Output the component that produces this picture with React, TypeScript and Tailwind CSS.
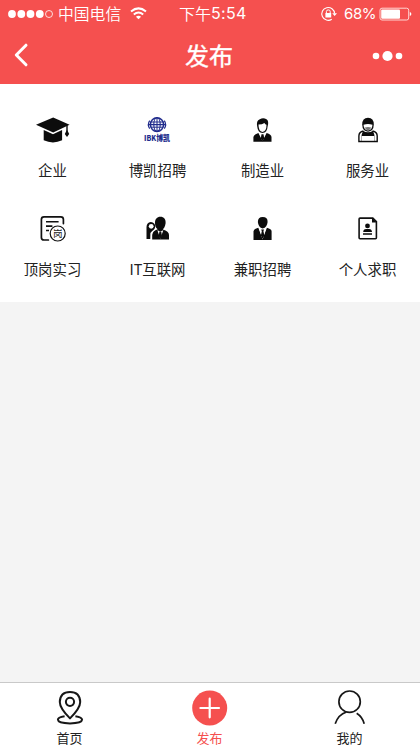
import type { ReactNode } from 'react';

const kai = 'font-["Noto_Sans_CJK_SC",sans-serif]';

function Icon({ children }: { children: ReactNode }) {
  return (
    <svg width="36" height="36" viewBox="0 0 36 36" fill="#0c0c0c" className="block">
      {children}
    </svg>
  );
}

const GraduationCap = () => (
  <Icon>
    <path d="M18.2 5.4 L34.6 12.8 L18.2 20.4 L1 12.8Z" />
    <path d="M8.7 18.1 Q13 19.8 18 22.2 Q23 19.8 27.1 18.1 V28.3 Q18 32.6 8.7 28.3Z" />
    <path d="M32 13.2 V20" stroke="#0c0c0c" strokeWidth="1.4" />
    <path d="M32 17.8 L34.2 22 L32 25 L29.8 22Z" />
  </Icon>
);

const BokaiLogo = () => (
  <Icon>
    <g fill="none" stroke="#202b8c">
      <ellipse cx="17" cy="12.6" rx="6.6" ry="6.8" strokeWidth="1.5" />
      <ellipse cx="17" cy="12.6" rx="3.2" ry="6.8" strokeWidth="1.1" />
      <path d="M17 5.8V19.4M10.6 10H23.4M10.6 15.2H23.4" strokeWidth="1" />
      <path d="M8 12.6H26" strokeWidth="1.3" />
      <path d="M9.7 8.6 Q7 12.6 9.7 16.6M24.3 8.6 Q27 12.6 24.3 16.6" strokeWidth="1.2" />
    </g>
    <text x="4" y="29.1" fontSize="8" fontWeight="900" fill="#202b8c" textLength="26" lengthAdjust="spacingAndGlyphs" fontFamily="Noto Sans CJK SC, sans-serif">IBK博凯</text>
  </Icon>
);

const OfficeWorker = () => (
  <Icon>
    <path d="M12.2 14.5 Q11 8.5 14.8 7.2 Q18.3 5.4 21.5 7.3 Q24.2 9 22.6 14.5 Q22.2 20.6 17.5 21 Q12.8 20.6 12.2 14.5Z" />
    <path d="M13.5 12.6 Q17.2 12.6 19.4 11 Q20.2 12.4 21.5 12.8 Q21.6 19.3 17.5 20 Q13.4 19.3 13.5 12.6Z" fill="#fff" />
    <path d="M8.4 29.7 V25 Q8.7 22.6 13.4 21 L17.5 29 L21.6 21 Q26.3 22.6 26.5 25 V29.7Z" />
    <path d="M14.2 20.8 L17.5 29 L20.8 20.8 L17.5 22.3Z" fill="#fff" />
    <path d="M16.5 22.3h2l.7 4-1.7 3.2-1.7-3.2Z" />
  </Icon>
);

const ServiceWorker = () => (
  <Icon>
    <path d="M12.2 12.6 Q12.2 5.7 18 5.7 Q23.8 5.7 23.8 12.6 Q23.6 19.4 18 19.8 Q12.4 19.4 12.2 12.6Z" />
    <path d="M13.5 12.8 Q18 11.2 22.5 12.8 Q22.1 18.3 18 18.6 Q13.9 18.3 13.5 12.8Z" fill="#fff" />
    <path d="M14.8 15.6 Q18 14.4 21.2 15.6 L20 17.6 Q18 18.6 16 17.6Z" fill="#777" />
    <path d="M13.4 19 Q8.9 20 8.9 24 V29.5 H27.2 V24 Q27.2 20 22.6 19" fill="none" stroke="#0c0c0c" strokeWidth="1.4" />
    <path d="M13 18.8 Q18 21.8 23 18.8 L24.4 23 V30 H11.6 V23Z" />
    <path d="M11.8 24 H24.2 V28.8 H11.8Z" fill="#fff" />
  </Icon>
);

const Internship = () => (
  <Icon>
    <path d="M28.4 12.6 V8.4 Q28.4 5.9 25.8 5.9 H9 Q6.4 5.9 6.4 8.4 V26.4 Q6.4 29 9 29 H13.4" fill="none" stroke="#111" strokeWidth="1.7" strokeLinecap="round" />
    <path d="M11 10.7H23.6M11 15.1H17.4M11 19.5H14" stroke="#111" strokeWidth="1.6" />
    <circle cx="22.7" cy="22.5" r="7.5" fill="#fff" stroke="#111" strokeWidth="1.2" />
    <text x="22.7" y="26" textAnchor="middle" fontSize="9.6" fill="#222" fontFamily="Noto Sans CJK SC, sans-serif">岗</text>
  </Icon>
);

const InternetWorker = () => (
  <Icon>
    <path d="M20.3 5.8 C24 5.8 26 8.5 25.6 12.2 C25.2 16 23.2 18 22.8 18.4 Q29 20.2 29 24 V28.6 H12.2 V24 Q12.5 20 17.7 18.3 C15.6 16.7 14.9 14.2 15 11.7 C14.9 8.2 17.1 5.8 20.3 5.8Z" />
    <path d="M17.4 19.3 L20.3 27.8 L23.3 19.3 L20.3 20.5Z" fill="#fff" />
    <path d="M19.4 20.5H21.2L22 25L20.3 27.8L18.7 25Z" />
    <path d="M6.5 28 V16 Q6.7 11.4 10.8 10.9 Q15.2 11.8 15.2 15.3 Q15.1 18.7 12.2 19.9 L10.4 22 V28Z" />
    <circle cx="11.2" cy="15.3" r="2.4" fill="#fff" />
    <path d="M12.6 20.2Q11 22.5 11 28.7" stroke="#fff" strokeWidth=".9" fill="none" />
  </Icon>
);

const Recruiter = () => (
  <Icon>
    <path d="M17.7 6.1 Q22.8 6.2 22.6 11 Q22.2 16.4 17.7 17.6 Q13.2 16.4 12.9 11 Q12.8 6.2 17.7 6.1Z" />
    <path d="M8.5 29 V20.2 Q8.8 17.9 13.3 16.8 L17.6 28 L21.9 16.8 Q26.4 17.9 26.6 20.2 V29Z" />
    <path d="M14 17 L17.6 28.6 L21.2 17 L17.6 19.2Z" fill="#fff" />
    <path d="M16.2 18.5 H19 L18.4 20.3 L19.4 24.5 L17.6 28 L15.9 24.5 L16.8 20.3Z" />
  </Icon>
);

const Resume = () => (
  <Icon>
    <path d="M10 7.1 H22.8 L26.4 10.7 V26.8 Q26.4 27.7 25.5 27.7 H10 Q9.1 27.7 9.1 26.8 V8 Q9.1 7.1 10 7.1Z" fill="#fff" stroke="#111" strokeWidth="1.6" />
    <path d="M22 6.8 V11.6 H26.8Z" />
    <circle cx="17.5" cy="14.9" r="2.4" />
    <path d="M13.2 21 Q13.3 18.1 16.2 18.1 H19 Q21.8 18.1 22 21ZM13 22.2H22V23.7H13Z" />
  </Icon>
);

const categories = [
  { label: '企业', icon: <GraduationCap /> },
  { label: '博凯招聘', icon: <BokaiLogo /> },
  { label: '制造业', icon: <OfficeWorker /> },
  { label: '服务业', icon: <ServiceWorker /> },
  { label: '顶岗实习', icon: <Internship /> },
  { label: 'IT互联网', icon: <InternetWorker /> },
  { label: '兼职招聘', icon: <Recruiter /> },
  { label: '个人求职', icon: <Resume /> },
];

function StatusBar() {
  return (
    <div className="grid h-7 grid-cols-[179px_1fr_101px] items-center whitespace-nowrap text-white">
      <div className="flex items-center pl-2">
        <svg width="46" height="10" viewBox="0 0 46 10" fill="#fff">
          <circle cx="4" cy="5" r="3.9" />
          <circle cx="13.3" cy="5" r="3.9" />
          <circle cx="22.5" cy="5" r="3.9" />
          <circle cx="31.8" cy="5" r="3.9" />
          <circle cx="41" cy="5" r="3.5" fill="none" stroke="#fff" strokeWidth=".8" />
        </svg>
        <span className="ml-1 w-[64px] text-[15.8px] leading-7 font-[350]">中国电信</span>
        <svg width="17" height="13" viewBox="0 0 17 13" className="-mt-px ml-2" fill="none" stroke="#fff" strokeWidth="2">
          <path d="M1 4.6 Q8.5-1.8 16 4.6M3.8 7.5Q8.5 3.6 13.2 7.5" />
          <path d="M8.5 12.2L5.9 9.8Q8.5 7.8 11.1 9.8Z" fill="#fff" stroke="none" />
        </svg>
      </div>
      <div className="flex items-center text-[16px] leading-[27px]">
        <span className="-mt-px font-[350]">下午</span>
        <span className='-mt-px font-["Inter",sans-serif] tracking-[0.3px]'>5:54</span>
      </div>
      <div className="flex items-center pl-px">
        <svg width="17" height="16" viewBox="0 0 17 16" fill="none" stroke="#fff" className="-mt-px">
          <path d="M11.8 13.2A6.4 6.4 0 1 1 14.6 7.5" strokeWidth="1.1" />
          <path d="M12.2 7.2H17L14.6 10Z" fill="#fff" stroke="none" />
          <rect x="5.4" y="7" width="5.8" height="4.5" fill="#fff" stroke="none" />
          <path d="M6.4 7V5.5Q6.4 3.9 8.3 3.9T10.2 5.5V7" strokeWidth="1" />
        </svg>
        <span className='ml-[7px] w-[35px] font-["Inter",sans-serif] text-[15px] leading-7 tracking-[-0.4px]'>68%</span>
        <svg width="33" height="14" viewBox="0 0 33 14" fill="none" className="-mt-px">
          <rect x="1" y="1.2" width="28.7" height="11.8" rx="2" stroke="#ffd5d3" />
          <rect x="2.2" y="2.5" width="18.8" height="9.2" rx="1" fill="#fff" />
          <path d="M30.8 5Q32.4 5.3 32.4 7T30.8 9Z" fill="#fff" />
        </svg>
      </div>
    </div>
  );
}

function NavBar() {
  return (
    <div className="grid h-14 grid-cols-3 items-center px-[14px] text-white">
      <svg width="15" height="26" viewBox="0 0 15 26" fill="none" stroke="#fff" strokeWidth="3" strokeLinecap="round" strokeLinejoin="round" className="-mt-0.5">
        <path d="M12 3.2L2.3 13L12 22.8" />
      </svg>
      <h1 className="-mt-0.5 pr-0.5 text-center text-[24px] leading-[54px] font-normal [-webkit-text-stroke:0.4px_white]">发布</h1>
      <svg width="34" height="12" viewBox="0 0 34 12" fill="#fff" className="-mt-px justify-self-end">
        <circle cx="4" cy="6" r="3.3" />
        <circle cx="15.5" cy="6" r="5.1" />
        <circle cx="27" cy="6" r="3.3" />
      </svg>
    </div>
  );
}

function TabBar() {
  return (
    <nav className="grid h-16 grid-cols-3 border-t border-[#c9c9c9] bg-white text-[13px] leading-5 text-[#222]">
      <div className="flex flex-col items-center pt-[7px] pr-px">
        <svg width="38" height="38" viewBox="0 0 38 38" fill="none" stroke="#171717" strokeWidth="2">
          <path d="M19 28.4Q8.8 18.2 8.8 12Q9 2 19 1.9Q29 2 29.2 12Q29.2 18.2 19 28.4Z" strokeLinejoin="round" />
          <circle cx="19" cy="11.8" r="4.1" />
          <path d="M13.6 26.2Q6.8 27.2 6.9 29.7Q7.2 33.4 19 33.4T31.1 29.7Q31 27.2 24.4 26.2" />
        </svg>
        <span>首页</span>
      </div>
      <div className="flex flex-col items-center pt-[7px] pr-px text-[#f5504f]">
        <svg width="38" height="38" viewBox="0 0 38 38">
          <circle cx="18.7" cy="18" r="17.5" fill="#f5504f" />
          <path d="M18.7 8.7V27.3M9.4 18H28" stroke="#fff" strokeWidth="2.2" strokeLinecap="round" />
        </svg>
        <span>发布</span>
      </div>
      <div className="flex flex-col items-center pt-[7px] pr-px">
        <svg width="38" height="38" viewBox="0 0 38 38" fill="none" stroke="#171717" strokeWidth="1.7">
          <circle cx="18.6" cy="11.7" r="10.7" />
          <path d="M4.2 33.8Q7.2 24.6 15.5 22M25.7 23.2Q31.6 27 33.2 33.8" />
        </svg>
        <span>我的</span>
      </div>
    </nav>
  );
}

export default function App() {
  return (
    <div className={`flex h-[746px] w-[420px] flex-col bg-[#f4f4f4] ${kai}`}>
      <header className="h-[84px] bg-[#f5504f]">
        <StatusBar />
        <NavBar />
      </header>
      <main className="flex-1">
        <section className="grid h-[218px] grid-cols-4 grid-rows-[99px_98px] bg-white pt-7">
          {categories.map(({ label, icon }) => (
            <div key={label} className="flex flex-col items-center">
              {icon}
              <span className="mt-[11px] text-[14.4px] leading-[22px] text-[#222]">{label}</span>
            </div>
          ))}
        </section>
      </main>
      <TabBar />
    </div>
  );
}
